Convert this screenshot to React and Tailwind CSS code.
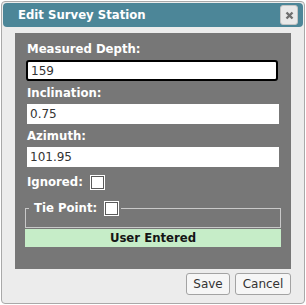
import { useState } from "react";

const bold = "font-['DejaVu_Sans_Condensed','DejaVu_Sans',sans-serif] font-bold";
const plain = "font-['DejaVu_Sans',sans-serif]";

function Check() {
  return (
    <span className="inline-block w-[15px] h-[15px] border border-white p-0">
      <span className="block w-full h-full border border-[#5a5a5a] bg-white" />
    </span>
  );
}

function Field({ label, value, focused }) {
  return (
    <div className="px-[2px] mb-[4px]">
      <div className={`${bold} text-[13px] leading-[16px] text-white`}>{label}</div>
      <input
        defaultValue={value}
        className={`${plain} mt-[3px] block w-full h-[20px] px-[3px] text-[12px] text-[#333] bg-white outline-none ${
          focused ? "border-2 border-black rounded-[3px] -mx-px w-[calc(100%+2px)] h-[21px] -mt-px" : "border-0"
        }`}
      />
    </div>
  );
}

export default function App() {
  const [ignored] = useState(false);

  return (
    <div className="w-[306px] h-[305px] bg-white p-px">
      <div className="w-[304px] h-[303px] border border-[#a9a9a9] rounded-[4px] bg-[#ececec] p-px flex flex-col">
        <div className="h-[24px] shrink-0 rounded-[4px] bg-[#4c8698] flex items-center justify-between pl-[15px] pr-[5px]">
          <span className={`${bold} text-[13px] leading-[16px] text-white`}>Edit Survey Station</span>
          <button className="w-[18px] h-[20px] rounded-[3px] border border-[#c4c4c4] bg-[#e9e9e9] flex items-center justify-center">
            <svg width="9" height="9" viewBox="0 0 9 9">
              <path d="M1.5 1.5 L7.5 7.5 M7.5 1.5 L1.5 7.5" stroke="#6f6f6f" strokeWidth="2.4" />
            </svg>
          </button>
        </div>

        <div className="mx-[12px] mt-[6px] h-[236px] shrink-0 bg-[#777777] px-[10px] pt-[8px]">
          <Field label="Measured Depth:" value="159" focused />
          <Field label="Inclination:" value="0.75" />
          <Field label="Azimuth:" value="101.95" />

          <div className="px-[2px] mt-[7px] flex items-center gap-[7px] h-[16px]">
            <span className={`${bold} text-[13px] leading-[16px] text-white`}>Ignored:</span>
            <Check />
          </div>

          <fieldset className="mt-[10px] border border-[#c9c9c9] px-[3px]">
            <legend className="px-[5px] pr-[2px] flex items-center gap-[7px] h-[16px]">
              <span className={`${bold} text-[13px] leading-[16px] text-white`}>Tie Point:</span>
              <Check />
            </legend>
            <div className="h-[11px]" />
          </fieldset>

          <div className={`${bold} mt-[1px] h-[18px] bg-[#c6edc8] text-[#151515] text-[13px] leading-[18px] text-center`}>
            User Entered
          </div>
        </div>

        <div className="flex justify-end gap-[5px] mt-[4px] pr-[12px]">
          <button className={`${plain} w-[44px] h-[22px] rounded-[3px] border border-[#a3a3a3] bg-[#f6f6f6] text-[12px] text-[#333]`}>
            Save
          </button>
          <button className={`${plain} w-[56px] h-[22px] rounded-[3px] border border-[#a3a3a3] bg-[#f6f6f6] text-[12px] text-[#333]`}>
            Cancel
          </button>
        </div>
      </div>
    </div>
  );
}
